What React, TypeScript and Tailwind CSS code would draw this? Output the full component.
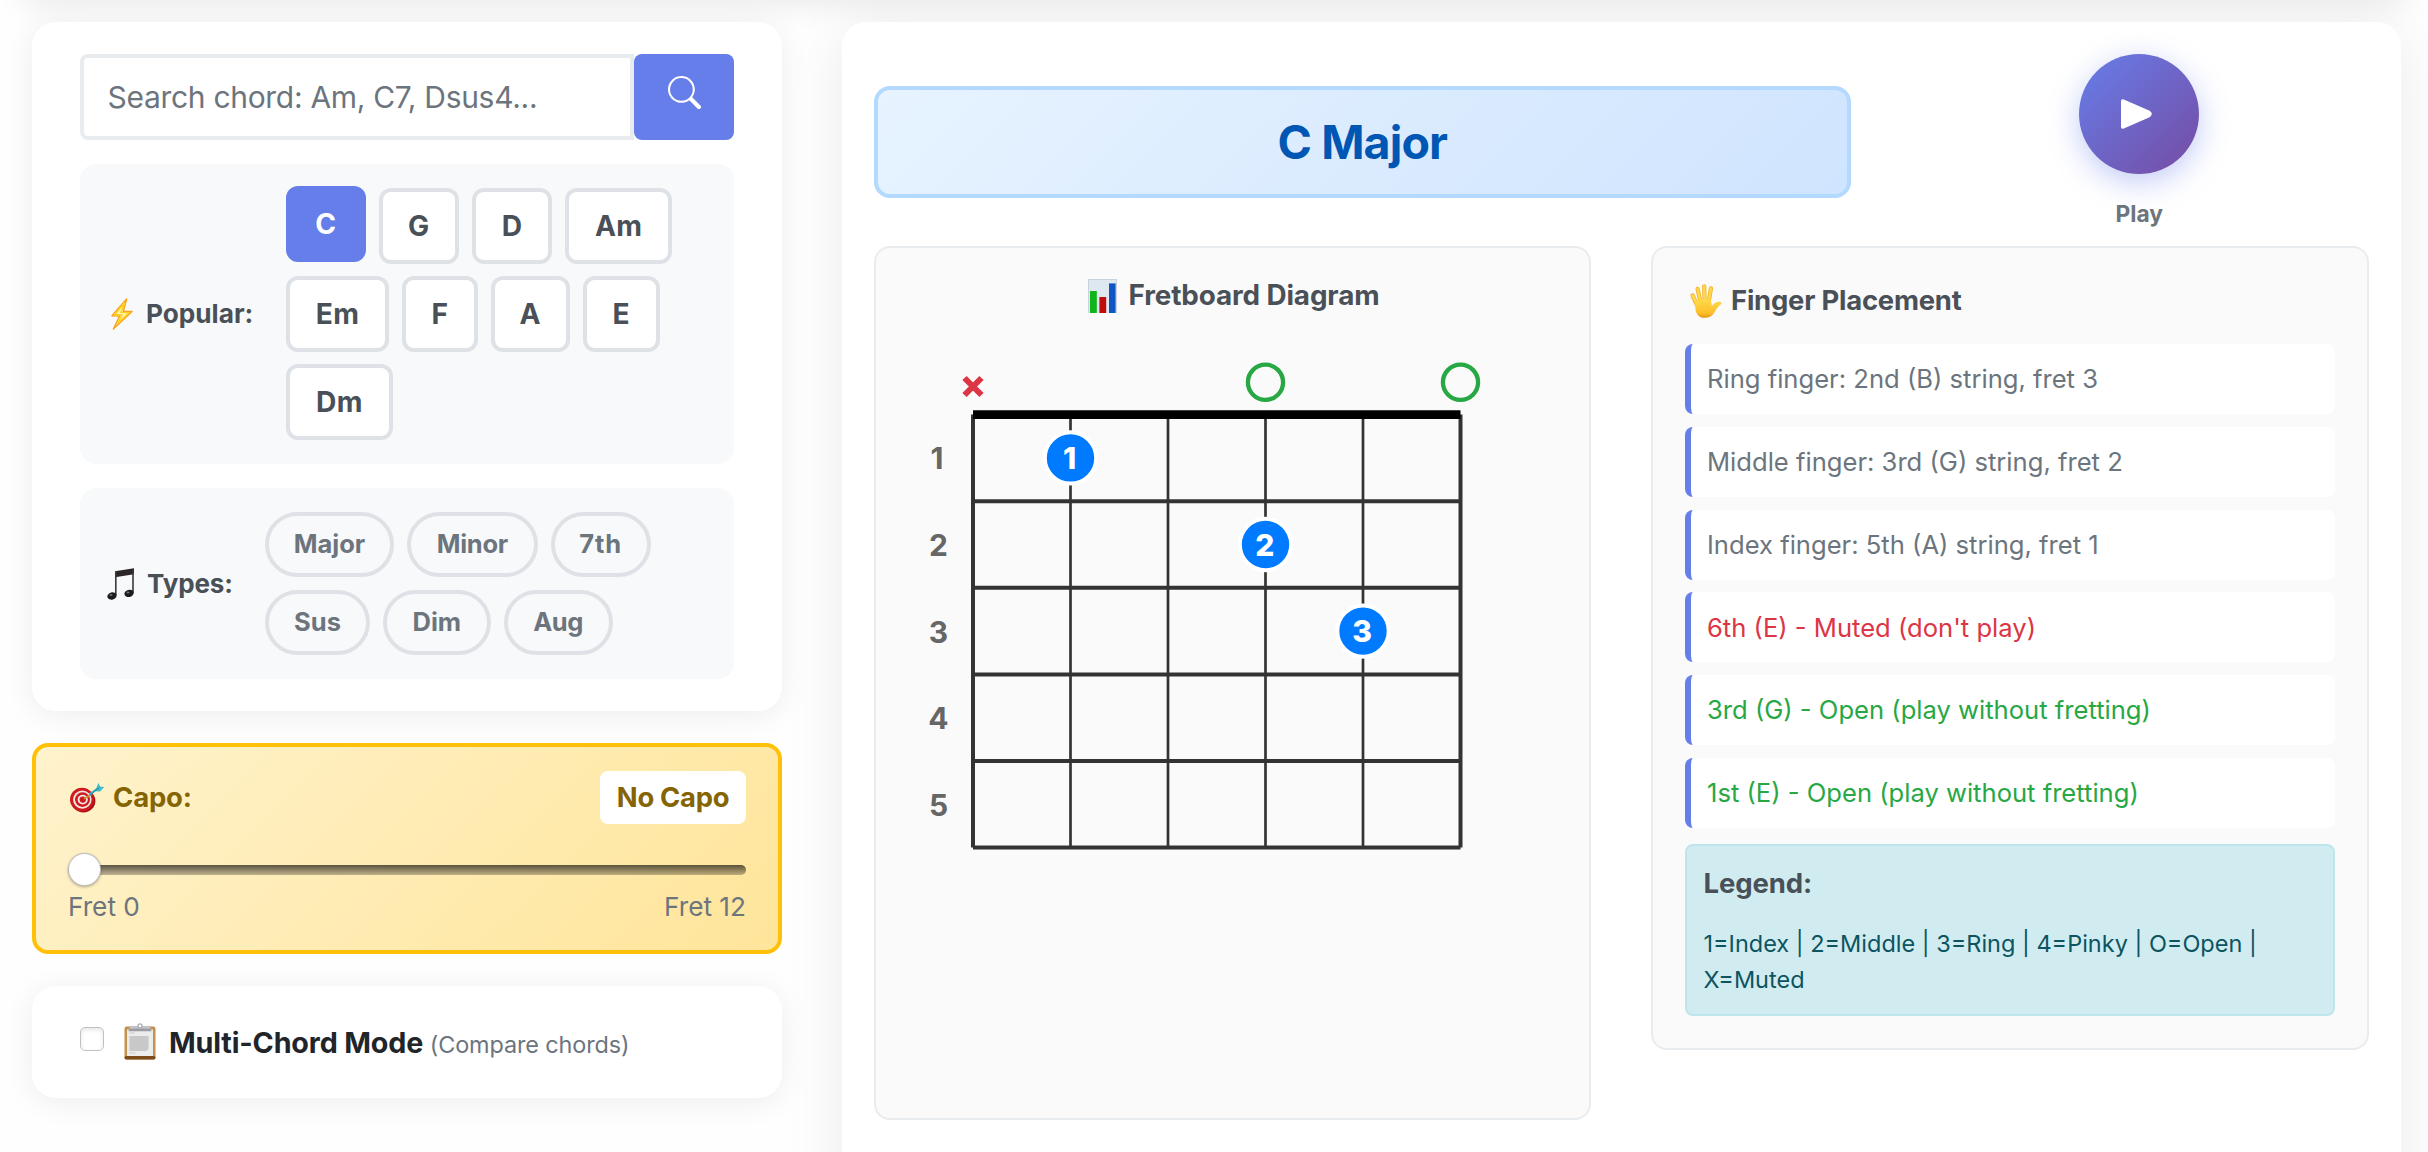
import React from "react";
import { BsSearch } from "react-icons/bs";

const CHORDS: { name: string; box: string; active?: boolean }[] = [
  { name: "C", box: "w-[80px]", active: true },
  { name: "G", box: "w-[80px]" },
  { name: "D", box: "w-[80.5px]" },
  { name: "Am", box: "w-[107px]" },
  { name: "Em", box: "w-[103px]" },
  { name: "F", box: "w-[76px]" },
  { name: "A", box: "w-[79px]" },
  { name: "E", box: "w-[77px]" },
  { name: "Dm", box: "w-[107px]" },
];

const TYPES: { name: string; box: string }[] = [
  { name: "Major", box: "w-[129px]" },
  { name: "Minor", box: "w-[131px] tracking-[-0.3px]" },
  { name: "7th", box: "w-[100px] tracking-[0.8px]" },
  { name: "Sus", box: "w-[105px]" },
  { name: "Dim", box: "w-[108px]" },
  { name: "Aug", box: "w-[109px] tracking-[-0.4px]" },
];

const FINGERS: { text: string; tone: string }[] = [
  { text: "Ring finger: 2nd (B) string, fret 3", tone: "text-[#6c757d]" },
  { text: "Middle finger: 3rd (G) string, fret 2", tone: "text-[#6c757d]" },
  { text: "Index finger: 5th (A) string, fret 1", tone: "text-[#6c757d]" },
  { text: "6th (E) - Muted (don't play)", tone: "text-[#dc3545]" },
  { text: "3rd (G) - Open (play without fretting)", tone: "text-[#28a745]" },
  { text: "1st (E) - Open (play without fretting)", tone: "text-[#28a745]" },
];

const BoltIcon = () => (
  <svg className="h-[32px] w-[22px]" viewBox="0 0 22 32">
    <path d="M15.600 1 1 17.800l7.600.2L2.400 31 21 13.400l-8.600-.2z" fill="#fff7b8" stroke="#fba31d" strokeWidth="1.500" strokeLinejoin="round" />
    <path d="M14 4.500 3.800 16.600l7 .2-4.200 8.600L18 14.600l-8-.2z" fill="none" stroke="#ffd11f" strokeWidth="1.500" />
  </svg>
);

const NoteIcon = () => (
  <svg className="h-[32px] w-[28px]" viewBox="0 0 28 32">
    <path d="M8 3.200 27 .2v6L8 9.200z" fill="#2b2528" />
    <path d="M8.800 4v23M26 2v23" stroke="#3a3a3d" strokeWidth="1.600" />
    <ellipse cx="5" cy="28" rx="4.700" ry="3.600" fill="#1c1c20" transform="rotate(-15 5 28)" />
    <ellipse cx="22" cy="25.400" rx="4.700" ry="3.600" fill="#1c1c20" transform="rotate(-15 22 25.400)" />
    <ellipse cx="4" cy="27" rx="1.500" ry="1" fill="#6f6f78" />
    <ellipse cx="21" cy="24.400" rx="1.500" ry="1" fill="#6f6f78" />
  </svg>
);

const TargetIcon = () => (
  <svg className="h-[30px] w-[35px]" viewBox="0 0 35 30">
    <ellipse cx="13.400" cy="18" rx="12" ry="11.400" fill="#a30f14" />
    <ellipse cx="12" cy="16.600" rx="12" ry="11.800" fill="#d0191d" />
    <ellipse cx="12.300" cy="16.600" rx="9.300" ry="9.100" fill="#f4e6e2" />
    <ellipse cx="12.500" cy="16.600" rx="7.500" ry="7.300" fill="#cf1a1e" />
    <ellipse cx="12.700" cy="16.600" rx="5.100" ry="4.900" fill="#f4e6e2" />
    <ellipse cx="12.800" cy="16.600" rx="3.200" ry="3.100" fill="#cf1a1e" />
    <path d="m14 15.800 7.600-4.600" stroke="#c39a3a" strokeWidth="1.600" />
    <path d="m19 10.400 7.200-5.200L28.400 0l1.800 3.400 4 .6-4 4.400-6-.2-4.400 5.200z" fill="#45bccb" />
    <path d="m20 12 9-7.400" stroke="#2590a6" strokeWidth="1.200" />
  </svg>
);

const ClipboardIcon = () => (
  <svg className="h-[37px] w-[32px]" viewBox="0 0 32 37">
    <rect x=".5" y="3.500" width="31" height="33" rx="2.200" fill="#c3924f" />
    <rect x=".5" y="33" width="31" height="3.400" rx="1.600" fill="#7c4d1b" />
    <path d="M3 6.500h26V33H3z" fill="#ececec" />
    <path d="M5.500 13h19v13l-2 2H5.500z" fill="#c8c8c8" />
    <path d="M5.500 10h5M5.500 30h6" stroke="#c9c9c9" strokeWidth="1" />
    <path d="M6 3.500h20l1.500 4.800h-23z" fill="#9c9ca2" />
    <path d="M6 3.500h20l.6 2H5.400z" fill="#c5c8ce" />
    <circle cx="16" cy="3" r="2.100" fill="#fff" stroke="#a6adb8" strokeWidth="1.300" />
  </svg>
);

const ChartIcon = () => (
  <svg className="h-[34px] w-[29px]" viewBox="0 0 29 34">
    <rect width="29" height="34" fill="#dfe7f0" />
    <path d="M0 .5h29M.5 0v34M28.500 0v34" stroke="#c9d3de" />
    <rect x="2" y="12" width="6.800" height="22" fill="#0fb51a" />
    <rect x="11.400" y="18" width="6.800" height="16" fill="#c00b0b" />
    <rect x="21" y="4.400" width="6.600" height="29.600" fill="#0d56c4" />
  </svg>
);

const HandIcon = () => (
  <svg className="h-[34px] w-[32px]" viewBox="0 0 32 34">
    <defs>
      <linearGradient id="palm" x1="0" y1="0" x2="0" y2="1">
        <stop offset="0" stopColor="#ffd94a" />
        <stop offset=".75" stopColor="#fdc02c" />
        <stop offset="1" stopColor="#e8920f" />
      </linearGradient>
    </defs>
    <g stroke="#f5b32a" strokeLinecap="round" strokeWidth="4.200" fill="none">
      <path d="M2.600 11.500 7 21" />
      <path d="M7.600 4.800 10.400 18" />
      <path d="M14.200 2.400 14.600 17" />
      <path d="M21 4.400 18.800 17" />
    </g>
    <path d="M4.800 17.500c3-2.800 12-3.600 16-1l1.200 5.600c1.400-2.600 4.200-4.400 7.400-4.400 2 0 2.600 1.600 1.200 2.800-3.200 2.600-4.400 5-6 7.800C22.400 32 19 33.800 14.400 33.800 9 33.800 6.400 30.600 5.600 26z" fill="url(#palm)" />
    <g stroke="#ffd84c" strokeLinecap="round" strokeWidth="2.600" fill="none">
      <path d="M2.600 11.500 7 20" />
      <path d="M7.600 4.800 10.400 17" />
      <path d="M14.200 2.600 14.600 17" />
      <path d="M21 4.600 18.800 17" />
    </g>
  </svg>
);

/* Geometry of the chord chart, in pixels of its own drawing. */
const X0 = 53;
const DX = 97.5;
const Y0 = 54.6;
const DY = 86.6;

function Fretboard() {
  const dots = [
    { string: 1, fret: 1 },
    { string: 3, fret: 2 },
    { string: 4, fret: 3 },
  ];
  return (
    <svg className="h-[500px] w-[570px] font-[Inter]" viewBox="0 0 570 500">
      {[0, 1, 2, 3, 4, 5].map((s) => (
        <line key={s} x1={X0 + s * DX} x2={X0 + s * DX} y1={Y0} y2={Y0 + 5 * DY} stroke="#333" strokeWidth={s === 0 || s === 5 ? 4 : 2.7} />
      ))}
      {[1, 2, 3, 4, 5].map((f) => (
        <line key={f} x1={X0} x2={X0 + 5 * DX} y1={Y0 + f * DY} y2={Y0 + f * DY} stroke="#333" strokeWidth="4" />
      ))}
      <line x1={X0} x2={X0 + 5 * DX} y1={Y0} y2={Y0} stroke="#000" strokeWidth="8.600" />
      {[1, 2, 3, 4, 5].map((f) => (
        <text key={f} x={f === 1 ? 17 : 18.5} y={Y0 + (f - 0.5) * DY + 11.5} textAnchor="middle" fontSize="30" fontWeight="700" fill="#666">{f}</text>
      ))}
      <path d="M44.500 18 61.500 35M61.500 18 44.500 35" stroke="#dc3545" strokeWidth="6" />
      <circle cx={X0 + 3 * DX} cy="22.300" r="17.600" fill="none" stroke="#28a745" strokeWidth="4.300" />
      <circle cx={X0 + 5 * DX} cy="22.300" r="17.600" fill="none" stroke="#28a745" strokeWidth="4.300" />
      {dots.map((d, i) => {
        const cx = X0 + d.string * DX;
        const cy = Y0 + (d.fret - 0.5) * DY;
        return (
          <g key={i}>
            <circle cx={cx} cy={cy} r="25.700" fill="#007bff" stroke="#fff" strokeWidth="4" />
            <text x={cx - 0.8} y={cy + 11.3} textAnchor="middle" fontSize="30" fontWeight="800" fill="#fff">{i + 1}</text>
          </g>
        );
      })}
    </svg>
  );
}

export default function App() {
  return (
    <div className="relative flex h-[1152px] w-[2428px] items-start overflow-hidden bg-[#fefefe] pt-[22px] pl-[32px] font-[Inter,sans-serif]">
      <div className="absolute -top-[40px] right-[24px] left-[24px] h-[36px] shadow-[0_8px_32px_rgba(0,0,0,0.09)]" />

      <aside className="relative flex w-[750px] shrink-0 flex-col gap-[32px]">
        <section className="flex h-[689px] flex-col gap-[24px] rounded-[24px] bg-white px-[48px] py-[32px] shadow-[0_4px_30px_rgba(0,0,0,0.07)]">
          <div className="flex h-[86px] w-[654px]">
            <div className="flex flex-1 items-center rounded-l-[8px] border-4 border-[#e9ecef] bg-white pt-px pl-[23.5px] text-[30px] tracking-[-0.3px] text-[#6c757d]">
              Search chord: Am, C7, Dsus4...
            </div>
            <button className="flex w-[100px] justify-center rounded-[8px] bg-[#667eea] pt-[22px] text-white">
              <BsSearch className="size-[33px]" />
            </button>
          </div>

          <div className="flex h-[300px] w-[654px] items-center rounded-[16px] bg-[#f8f9fa]">
            <div className="flex w-[206px] shrink-0 items-center gap-[13px] pl-[31px] text-[26.2px] font-bold text-[#495057]">
              <BoltIcon />
              <span>Popular:</span>
            </div>
            <div className="flex w-[410px] flex-wrap gap-[12.9px]">
              {CHORDS.map((c) => (
                <button
                  key={c.name}
                  className={`flex h-[75.2px] items-center justify-center rounded-[12px] border-4 text-[28.2px] font-bold tracking-[0.4px] ${c.box} ${
                    c.active ? "-translate-y-[2px] border-[#667eea] bg-[#667eea] text-white" : "border-[#dee2e6] bg-white text-[#495057]"
                  }`}
                >
                  {c.name}
                </button>
              ))}
            </div>
          </div>

          <div className="flex h-[191px] w-[654px] items-center rounded-[16px] bg-[#f8f9fa]">
            <div className="flex w-[185px] shrink-0 items-center gap-[12px] pl-[27px] text-[26px] font-bold tracking-[-0.1px] text-[#495057]">
              <NoteIcon />
              <span>Types:</span>
            </div>
            <div className="flex w-[410px] flex-wrap gap-x-[12.8px] gap-y-[13px]">
              {TYPES.map((t) => (
                <button key={t.name} className={`flex h-[65px] items-center justify-center rounded-full border-4 border-[#dee2e6] text-[25.500px] font-[650] text-[#6c757d] ${t.box}`}>
                  {t.name}
                </button>
              ))}
            </div>
          </div>
        </section>

        <section className="h-[211px] rounded-[16px] border-4 border-[#ffc107] bg-[linear-gradient(135deg,#fff3cd_0%,#ffe59a_100%)] px-[32px] pt-[24px]">
          <div className="flex h-[53px] items-center justify-between font-bold text-[#856404]">
            <div className="flex items-center gap-[8px] pl-[2px] text-[27.5px] tracking-[-0.2px]">
              <TargetIcon />
              <span>Capo:</span>
            </div>
            <div className="flex h-[53px] w-[146px] items-center justify-center rounded-[8px] bg-white text-[27.4px] tracking-[-0.3px]">No Capo</div>
          </div>
          <div className="relative mt-[41px] h-[10px] rounded-[5px] bg-linear-to-b from-black/65 to-black/25">
            <div className="absolute -top-[12px] left-0 size-[33px] rounded-full border border-black/25 bg-white shadow-[0_1px_3px_rgba(0,0,0,0.3)]" />
          </div>
          <div className="mt-[12px] flex justify-between text-[26.2px] leading-[40px] text-[#6c757d]">
            <span>Fret 0</span>
            <span>Fret 12</span>
          </div>
        </section>

        <section className="flex h-[112px] items-center rounded-[24px] bg-white pl-[48px] shadow-[0_4px_30px_rgba(0,0,0,0.07)]">
          <div className="mb-[6px] size-[24px] rounded-[5px] border-[1.5px] border-[#c2c2c2] bg-white shadow-[inset_0_2px_4px_rgba(0,0,0,0.1)]" />
          <div className="ml-[20px] flex items-center">
            <ClipboardIcon />
            <p className="ml-[13px] pt-[2px] text-[28.7px] font-bold tracking-[-0.15px] text-[#212529]">
              Multi-Chord Mode <span className="text-[23.4px] font-normal tracking-[-0.1px] text-[#6c757d]">(Compare chords)</span>
            </p>
          </div>
        </section>
      </aside>

      <main className="relative ml-[60px] h-[1200px] w-[1559px] shrink-0 rounded-[24px] bg-white px-[32px] pt-[32px] shadow-[0_8px_60px_rgba(0,0,0,0.08)]">
        <div className="flex h-[192px] items-start">
          <div className="mt-[32px] flex h-[112px] w-[978px] items-center justify-center rounded-[16px] border-4 border-[#b3d9ff] bg-[linear-gradient(135deg,#e7f3ff,#cfe4fe)] pt-[2px] text-[46.500px] font-bold tracking-[-0.9px] text-[#0056b3]">
            C Major
          </div>
          <div className="ml-[59px] flex w-[460px] flex-col items-center">
            <button className="flex size-[120px] items-center justify-center rounded-full bg-[linear-gradient(135deg,#667eea_0%,#764ba2_100%)] pr-[6px] shadow-[0_8px_30px_rgba(102,126,234,0.4)]">
              <svg className="h-[30px] w-[31px]" viewBox="0 0 31 30">
                <path d="M0 2.200Q0-.4 2.800.6L28.600 11.800Q33 15 28.600 18.200L2.800 29.400Q0 30.400 0 28z" fill="#fff" />
              </svg>
            </button>
            <span className="mt-[23px] text-[22.8px] leading-[34px] font-bold text-[#6c757d]">Play</span>
          </div>
        </div>

        <div className="flex items-start gap-[60px]">
          <section className="h-[874px] w-[717px] rounded-[16px] border-2 border-[#e9ecef] bg-[#fafafa] pt-[29px]">
            <h3 className="flex h-[38px] items-center justify-center gap-[12px] pl-[2px] text-[27.8px] font-bold tracking-[-0.1px] text-[#495057]">
              <ChartIcon />
              <span>Fretboard Diagram</span>
            </h3>
            <div className="mt-[45px] pl-[44px]">
              <Fretboard />
            </div>
          </section>

          <section className="h-[804px] w-[718px] rounded-[16px] border-2 border-[#e9ecef] bg-[#fafafa] px-[32px] pt-[34px]">
            <h3 className="flex h-[38px] items-center gap-[9px] pl-[5px] text-[27.4px] font-bold tracking-[-0.2px] text-[#495057]">
              <HandIcon />
              <span>Finger Placement</span>
            </h3>
            <ul className="mt-[24px] flex flex-col gap-[12.8px]">
              {FINGERS.map((f) => (
                <li key={f.text} className={`flex h-[70px] items-center rounded-[8px] border-l-[6px] border-[#667eea] bg-white pt-px pl-[16px] text-[25.6px] ${f.tone}`}>
                  {f.text}
                </li>
              ))}
            </ul>
            <div className="mt-[16px] h-[172px] rounded-[8px] border-2 border-[#bee5eb] bg-[#d1ecf1] pt-[16px] pl-[16.5px]">
              <p className="text-[27.5px] leading-[42px] font-bold tracking-[-0.1px] text-[#495057]">Legend:</p>
              <p className="mt-[22px] text-[23.5px] leading-[36px] text-[#0c5460]">
                1=Index | 2=Middle | 3=Ring | 4=Pinky | O=Open |<br />
                X=Muted
              </p>
            </div>
          </section>
        </div>
      </main>
    </div>
  );
}
